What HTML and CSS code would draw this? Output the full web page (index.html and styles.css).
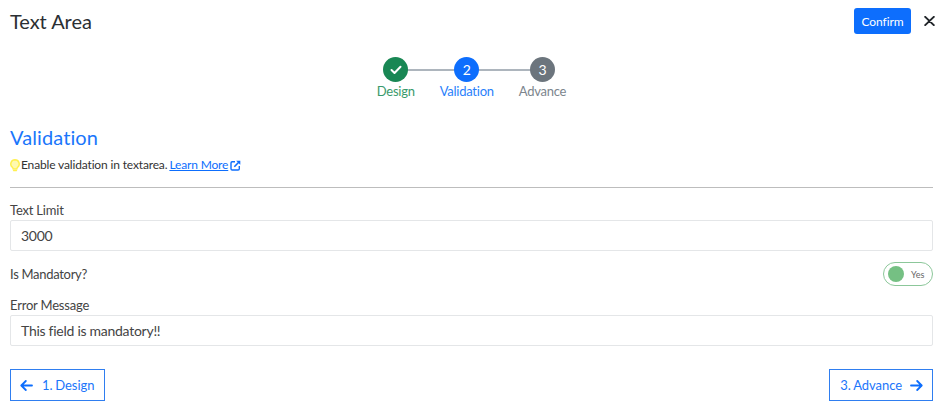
FILE: index.html
```html
<!DOCTYPE html>
<html lang="en">
<head>
<meta charset="utf-8">
<title>Text Area</title>
<link rel="stylesheet" href="styles.css">
</head>
<body>
<div class="page">
  <header class="header">
    <h1 class="title">Text Area</h1>
    <div class="header-actions">
      <button class="confirm">Confirm</button>
      <svg class="close" width="11" height="10" viewBox="0 0 11 10"><path d="M1.2 .9l8.600 8.200M9.800 .9l-8.600 8.200" stroke="#212529" stroke-width="2" stroke-linecap="round" fill="none"/></svg>
    </div>
  </header>
  <div class="stepper-wrap">
    <div class="stepper">
      <span class="step-line"></span>
      <div class="step step-done">
        <span class="dot"><svg width="12" height="10" viewBox="0 0 12 10"><path d="M1.500 5l3 3 6-6.200" stroke="#fff" stroke-width="2" stroke-linecap="round" stroke-linejoin="round" fill="none"/></svg></span>
        <span class="step-label">Design</span>
      </div>
      <div class="step step-active">
        <span class="dot">2</span>
        <span class="step-label">Validation</span>
      </div>
      <div class="step step-next">
        <span class="dot">3</span>
        <span class="step-label">Advance</span>
      </div>
    </div>
  </div>
  <h2 class="section-title">Validation</h2>
  <p class="hint">
    <svg class="bulb" width="10" height="13" viewBox="0 0 10 13"><path d="M5 .8a4.200 4.200 0 0 0-2.700 7.400c.5.5.8 1.100.9 1.700h3.600c.1-.6.4-1.200.9-1.700A4.200 4.200 0 0 0 5 .8z" fill="#fff9b0" stroke="#fff04f" stroke-width="1.500"/><path d="M3.500 11.600h3" stroke="#fff04f" stroke-width="1.400" stroke-linecap="round"/></svg><span>Enable validation in textarea.</span>
    <a class="link" href="#">Learn More</a><svg class="ext" width="11" height="11" viewBox="0 0 11 11"><path d="M5 1.700H2.200a1.200 1.200 0 0 0-1.200 1.200v5.900A1.200 1.200 0 0 0 2.200 10h5.900a1.200 1.200 0 0 0 1.200-1.200V6" fill="none" stroke="#0d6efd" stroke-width="1.400"/><path d="M4.300 6.700L9 2" stroke="#0d6efd" stroke-width="1.600"/><path d="M6.200.7h4.100v4.100z" fill="#0d6efd"/></svg>
  </p>
  <hr class="divider">
  <label class="field-label label-limit">Text Limit</label>
  <div class="input">3000</div>
  <div class="toggle-row">
    <span class="field-label row-label">Is Mandatory?</span>
    <span class="toggle"><span class="knob"></span><span class="toggle-text">Yes</span></span>
  </div>
  <label class="field-label label-error">Error Message</label>
  <div class="input">This field is mandatory!!</div>
  <footer class="footer">
    <button class="nav-btn nav-back"><svg width="13" height="11" viewBox="0 0 13 11"><path d="M12 5.500H1.500M5.800 1L1.300 5.500 5.800 10" stroke="#0d6efd" stroke-width="1.800" stroke-linecap="round" stroke-linejoin="round" fill="none"/></svg><span>1. Design</span></button>
    <button class="nav-btn nav-next"><span>3. Advance</span><svg width="13" height="11" viewBox="0 0 13 11"><path d="M1 5.500h10.500M7.200 1l4.500 4.500L7.200 10" stroke="#0d6efd" stroke-width="1.800" stroke-linecap="round" stroke-linejoin="round" fill="none"/></svg></button>
  </footer>
</div>
</body>
</html>
```

FILE: styles.css
```css
* { box-sizing: border-box; }
html, body { margin: 0; padding: 0; background: #fff; }
body { font-family: Lato, sans-serif; color: #212529; overflow: hidden; }
.page { width: 942px; height: 409px; padding: 8px 9px 0 10px; }
.header { display: flex; justify-content: space-between; align-items: center; height: 26px; }
.title { margin: 0; font-size: 20px; font-weight: 400; line-height: 26px; color: #2b2f33; letter-spacing: -0.05px; }
.header-actions { display: flex; align-items: center; gap: 13px; margin-right: -2px; }
.confirm { width: 57px; height: 26px; border: 0; border-radius: 3px; background: #0d6efd; color: #fff; font: 400 12px Lato, sans-serif; letter-spacing: -0.1px; padding: 0; }
.close { display: block; }
.stepper-wrap { display: flex; justify-content: center; margin-top: 23px; }
.stepper { display: flex; gap: 25px; height: 43px; position: relative; }
.step-line { position: absolute; left: 18px; right: 23px; top: 12px; height: 2px; background: #adb5bd; }
.step { display: flex; flex-direction: column; align-items: center; position: relative; }
.dot { flex: none; width: 25px; height: 25px; border-radius: 50%; display: flex; align-items: center; justify-content: center; color: #fff; font-size: 14px; }
.step-label { font-size: 13px; line-height: 16px; margin-top: 1px; white-space: nowrap; letter-spacing: -0.25px; }
.step-done .dot { background: #198754; }
.step-done .step-label { color: #3a9a6c; }
.step-active .dot { background: #0d6efd; }
.step-active .step-label { color: #2a7ffb; }
.step-next .dot { background: #6c757d; }
.step-next .step-label { color: #7c858d; }
.section-title { margin: 24px 0 0; font-size: 20px; font-weight: 400; line-height: 26px; color: #1b76fb; letter-spacing: 0.1px; }
.hint { margin: 7px 0 0; font-size: 12px; line-height: 16px; display: flex; align-items: center; white-space: pre; letter-spacing: -0.15px; color: #333; }
.bulb { margin-right: 1px; }
.link { color: #0d6efd; text-decoration: underline; margin-left: 2px; margin-right: 2px; }
.divider { margin: 14px 0 0; border: 0; border-top: 1px solid #bdbdbd; }
.field-label { display: block; font-size: 13px; line-height: 16px; color: #444; letter-spacing: -0.2px; }
.label-limit { margin-top: 14px; }
.label-error { margin-top: 11px; }
.row-label { margin-top: -1px; letter-spacing: -0.3px; }
.input { height: 31px; margin-top: 2px; padding: 0 10px; border: 1px solid #e4e6e8; border-radius: 2px; font-size: 14px; line-height: 29px; color: #444; letter-spacing: -0.27px; }
.toggle-row { display: flex; justify-content: space-between; align-items: center; margin-top: 11px; height: 24px; }
.toggle { width: 50px; height: 24px; border: 1px solid #8cc79a; border-radius: 12px; display: flex; align-items: center; padding-left: 4px; gap: 6px; }
.knob { width: 16px; height: 16px; border-radius: 50%; background: #75c083; }
.toggle-text { font-size: 9px; color: #666; margin-left: 1px; }
.footer { display: flex; justify-content: space-between; margin-top: 23px; }
.nav-btn { height: 32px; border: 1px solid #2f7ef0; border-radius: 0; background: #fff; color: #1b76fb; font: 400 13px Lato, sans-serif; letter-spacing: -0.05px; word-spacing: -0.5px; display: flex; align-items: center; }
.nav-back { padding: 0 10px 0 9px; gap: 9px; }
.nav-next { padding: 0 9px 0 10px; gap: 8px; }
```
